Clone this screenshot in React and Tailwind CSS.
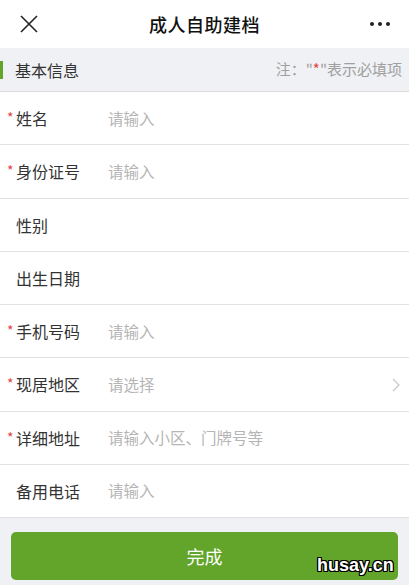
import React from "react";

const rows = [
  { label: "姓名", req: true, ph: "请输入" },
  { label: "身份证号", req: true, ph: "请输入" },
  { label: "性别", req: false, ph: "" },
  { label: "出生日期", req: false, ph: "" },
  { label: "手机号码", req: true, ph: "请输入" },
  { label: "现居地区", req: true, ph: "请选择", arrow: true },
  { label: "详细地址", req: true, ph: "请输入小区、门牌号等" },
  { label: "备用电话", req: false, ph: "请输入" },
];

export default function App() {
  return (
    <div
      className="w-[409px] h-[585px] bg-[#eff1f4] flex flex-col overflow-hidden relative"
      style={{ fontFamily: '"Noto Sans CJK SC", "Noto Sans", sans-serif' }}
    >
      <div className="h-12 bg-white flex items-center justify-between px-[18px] shrink-0">
        <svg width="20" height="20" viewBox="0 0 20 20" className="ml-[1px]">
          <path d="M2 2 L18 18 M18 2 L2 18" stroke="#222" strokeWidth="1.6" fill="none" />
        </svg>
        <div className="text-[18px] font-medium text-[#111] tracking-[0.5px]">成人自助建档</div>
        <div className="flex gap-[4px] mr-[1px]">
          <span className="w-[4px] h-[4px] rounded-full bg-[#222]" />
          <span className="w-[4px] h-[4px] rounded-full bg-[#222]" />
          <span className="w-[4px] h-[4px] rounded-full bg-[#222]" />
        </div>
      </div>
      <div className="h-[44px] flex items-center justify-between border-b border-[#dcdcdc] shrink-0 relative pr-[7px]">
        <span className="absolute left-0 top-[13px] w-[3px] h-[18px] bg-[#62a52a]" />
        <span className="ml-[15px] text-[16px] text-[#333]">基本信息</span>
        <span className="text-[15px] text-[#a0a0a0]">
          注：&quot;<span className="text-[#e64340]">*</span>&quot;表示必填项
        </span>
      </div>
      <div className="bg-white flex flex-col shrink-0">
        {rows.map((r) => (
          <div
            key={r.label}
            className="h-[53.25px] border-b border-[#e2e2e2] flex items-center relative"
          >
            <div className="w-[108px] flex items-center pl-[16px] text-[16px] text-[#333] relative">
              {r.req && (
                <span className="absolute left-[7px] top-[1px] text-[14px] text-[#e64340]">*</span>
              )}
              {r.label}
            </div>
            <div className="text-[15.5px] text-[#b5b5b5]">{r.ph}</div>
            {r.arrow && (
              <svg width="8" height="14" viewBox="0 0 8 14" className="absolute right-[9px] top-[20px]">
                <path d="M1 1 L7 7 L1 13" stroke="#c8c8c8" strokeWidth="1.2" fill="none" />
              </svg>
            )}
          </div>
        ))}
      </div>
      <div className="px-[11px] pt-[14px]">
        <div className="h-12 rounded-[5px] bg-[#62a52a] flex items-center justify-center text-white text-[18px]">
          完成
        </div>
      </div>
      <div
        className="absolute left-[317px] top-[553px] leading-[24px] text-white text-[18px] font-bold [text-shadow:1px_1px_0_#000,-1px_-1px_0_#000,1px_-1px_0_#000,-1px_1px_0_#000,0_1px_0_#000,0_-1px_0_#000,1px_0_0_#000,-1px_0_0_#000]"
        style={{ fontFamily: '"Liberation Sans", sans-serif' }}
      >
        husay.cn
      </div>
    </div>
  );
}
